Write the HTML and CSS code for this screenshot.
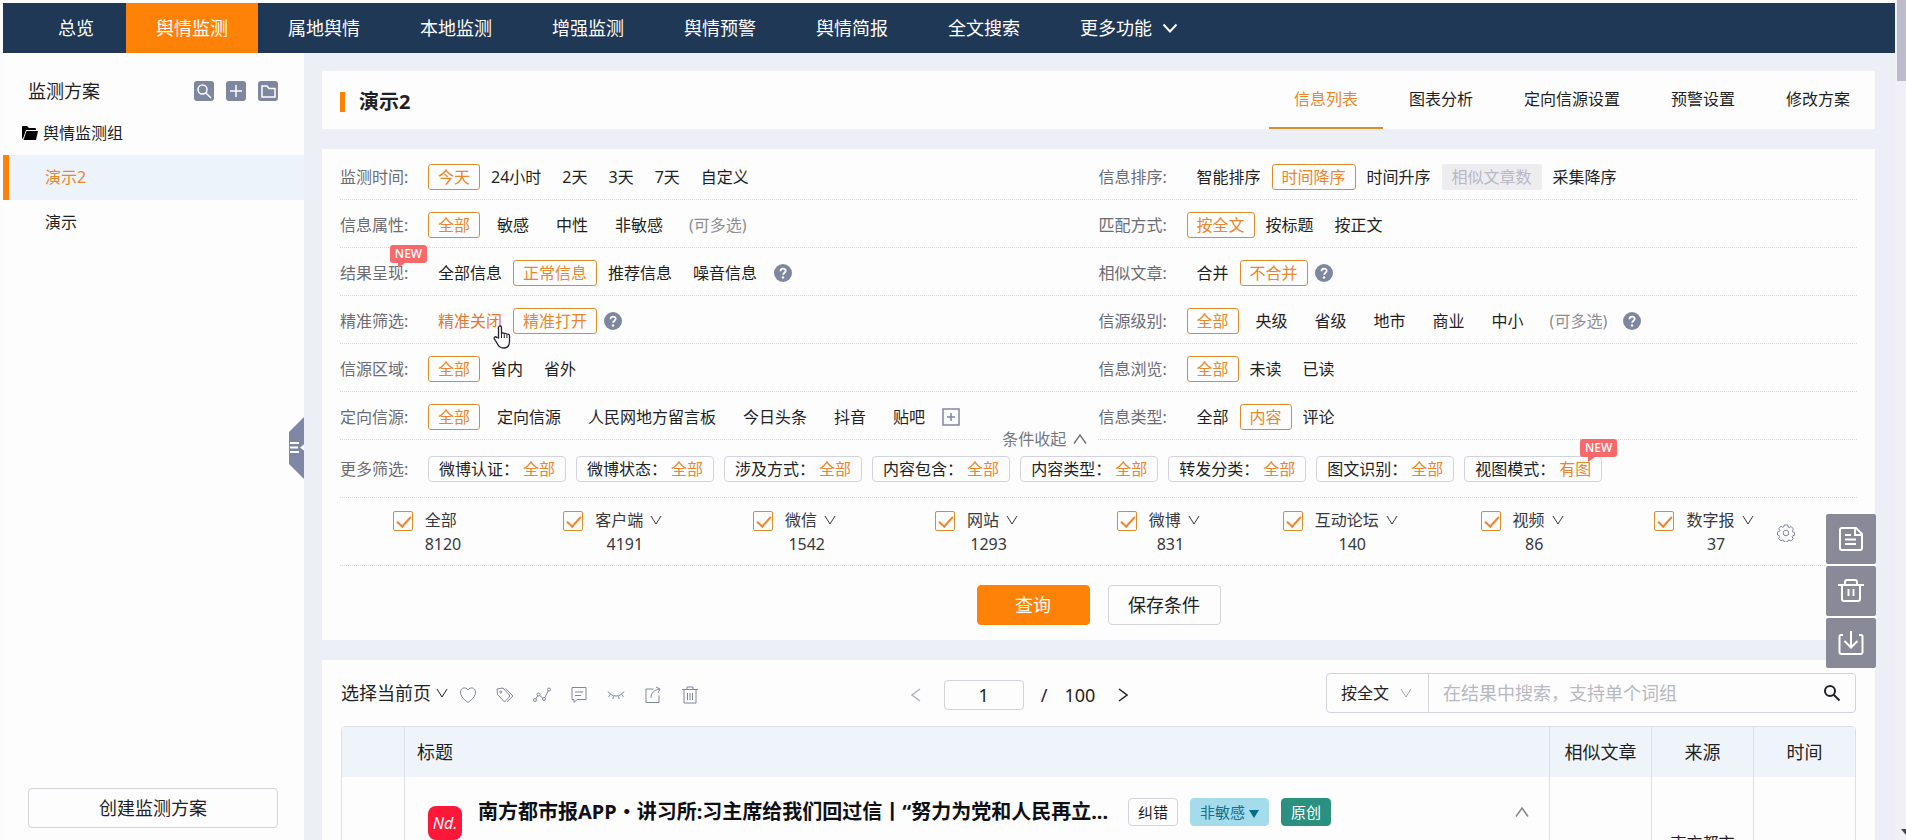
FILE: index.html
```html
<!DOCTYPE html>
<html lang="zh-CN">
<head>
    <meta charset="UTF-8">
    <meta name="viewport" content="width=device-width, initial-scale=1.0">
    <title>舆情监测</title>
    <link rel="stylesheet" href="styles.css">
</head>
<body>

    <!-- Shared icons -->
    <svg class="icon-defs" aria-hidden="true">
        <symbol id="down" viewBox="0 0 12 12"><path d="M1 2l5 8 5-8" /></symbol>
        <symbol id="up" viewBox="0 0 14 12"><path d="M1 10.500l6-8.500 6 8.500" /></symbol>
        <symbol id="search" viewBox="0 0 18 18"><circle cx="7" cy="7" r="5" /><path d="M10.500 10.500l6 6" /></symbol>
        <symbol id="help" viewBox="0 0 18 18">
            <circle cx="9" cy="9" r="9" fill="#7f869f" stroke="none" />
            <path d="M6.500 7.200c0-3.400 5.200-3.400 5.200-.4 0 1.800-2.600 2-2.600 4" stroke="#fff" stroke-width="1.800" />
            <circle cx="9" cy="13.500" r="1.200" fill="#fff" stroke="none" />
        </symbol>
    </svg>

    <div class="page">
        <!-- Navigation Bar -->
        <nav class="topnav">
            <a href="#">总览</a>
            <a href="#" class="active">舆情监测</a>
            <a href="#">属地舆情</a>
            <a href="#">本地监测</a>
            <a href="#">增强监测</a>
            <a href="#">舆情预警</a>
            <a href="#">舆情简报</a>
            <a href="#">全文搜索</a>
            <a href="#">更多功能 <svg class="icon nav-arrow" viewBox="0 0 16 10"><path d="M1.500 1.500L8 8.500l6.500-7" /></svg></a>
        </nav>

        <div class="content">
            <!-- Sidebar -->
            <aside class="sidebar">
                <div class="side-head">
                    <h2>监测方案</h2>
                    <button aria-label="搜索"><svg class="icon" viewBox="0 0 20 20"><circle cx="8.500" cy="8.500" r="4.500" /><path d="M12 12l5 5" /></svg></button>
                    <button aria-label="新增"><svg class="icon" viewBox="0 0 20 20"><path d="M10 4v12M4 10h12" /></svg></button>
                    <button aria-label="文件夹"><svg class="icon" viewBox="0 0 20 20"><path d="M4 5h5l2 2.500h6V16H4z" /></svg></button>
                </div>
                <div class="side-group">
                    <svg width="16" height="14" viewBox="0 0 16 14"><path d="M0 1Q0 0 1 0h4l2 2h6q1 0 1 1v1H4L1 12.500Q0 13 0 12z" /><path d="M4.500 5H16l-2 9H1.500z" /></svg>
                    舆情监测组
                </div>
                <a href="#" class="side-item active">演示2</a>
                <a href="#" class="side-item">演示</a>
                <button class="side-create">创建监测方案</button>
                <button class="side-handle" aria-label="收起">
                    <svg width="15" height="62" viewBox="0 0 15 62">
                        <path d="M15 0v62L0 47V15z" fill="#7f86a6" />
                        <path d="M1 26h9M1 30.500h8M1 35h9" stroke="#fff" stroke-width="2" />
                        <path d="M15 27.500v6l-4-3z" fill="#fff" />
                    </svg>
                </button>
            </aside>

            <main class="main">
                <!-- Title and tabs -->
                <header class="card title-card">
                    <h1>演示2</h1>
                    <div class="tabs">
                        <a href="#" class="active">信息列表</a>
                        <a href="#">图表分析</a>
                        <a href="#">定向信源设置</a>
                        <a href="#">预警设置</a>
                        <a href="#">修改方案</a>
                    </div>
                </header>

                <!-- Filters -->
                <section class="card filter-card">
                    <div class="filter-row">
                        <div class="filter">
                            <span class="label">监测时间:</span>
                            <button class="opt on">今天</button><button class="opt">24小时</button><button class="opt">2天</button><button class="opt">3天</button><button class="opt">7天</button><button class="opt">自定义</button>
                        </div>
                        <div class="filter">
                            <span class="label">信息排序:</span>
                            <button class="opt">智能排序</button><button class="opt on">时间降序</button><button class="opt">时间升序</button><button class="opt" disabled>相似文章数</button><button class="opt">采集降序</button>
                        </div>
                    </div>
                    <div class="filter-row">
                        <div class="filter wide">
                            <span class="label">信息属性:</span>
                            <button class="opt on">全部</button><button class="opt">敏感</button><button class="opt">中性</button><button class="opt">非敏感</button><span class="hint">(可多选)</span>
                        </div>
                        <div class="filter">
                            <span class="label">匹配方式:</span>
                            <button class="opt on">按全文</button><button class="opt">按标题</button><button class="opt">按正文</button>
                        </div>
                    </div>
                    <div class="filter-row">
                        <div class="filter">
                            <span class="label">结果呈现:<span class="new">NEW</span></span>
                            <button class="opt">全部信息</button><button class="opt on">正常信息</button><button class="opt">推荐信息</button><button class="opt">噪音信息</button>
                            <svg class="help"><use href="#help" /></svg>
                        </div>
                        <div class="filter">
                            <span class="label">相似文章:</span>
                            <button class="opt">合并</button><button class="opt on">不合并</button>
                            <svg class="help"><use href="#help" /></svg>
                        </div>
                    </div>
                    <div class="filter-row">
                        <div class="filter">
                            <span class="label">精准筛选:</span>
                            <button class="opt hover">精准关闭
                                <svg class="hand" viewBox="0 0 18 24"><path d="M5.500 13V2.500c0-2 3-2 3 0V9c0-1.500 2.800-1.500 2.800.3 0-1.400 2.600-1.200 2.600.5 0-1 2.600-.9 2.600 1V16c0 4-2 7-6 7-3.500 0-4.800-1.500-6-4l-3-5c-1-2 1-3 2.300-1.500z" fill="#fff" stroke="#223" stroke-width="1.300" /><path d="M8.500 9v4M11.300 9.500v3.500M13.900 10v3" stroke="#223" /></svg>
                            </button><button class="opt on">精准打开</button>
                            <svg class="help"><use href="#help" /></svg>
                        </div>
                        <div class="filter wide">
                            <span class="label">信源级别:</span>
                            <button class="opt on">全部</button><button class="opt">央级</button><button class="opt">省级</button><button class="opt">地市</button><button class="opt">商业</button><button class="opt">中小</button><span class="hint">(可多选)</span>
                            <svg class="help"><use href="#help" /></svg>
                        </div>
                    </div>
                    <div class="filter-row">
                        <div class="filter">
                            <span class="label">信源区域:</span>
                            <button class="opt on">全部</button><button class="opt">省内</button><button class="opt">省外</button>
                        </div>
                        <div class="filter">
                            <span class="label">信息浏览:</span>
                            <button class="opt on">全部</button><button class="opt">未读</button><button class="opt">已读</button>
                        </div>
                    </div>
                    <div class="filter-row">
                        <div class="filter wide">
                            <span class="label">定向信源:</span>
                            <button class="opt on">全部</button><button class="opt">定向信源</button><button class="opt">人民网地方留言板</button><button class="opt">今日头条</button><button class="opt">抖音</button><button class="opt">贴吧</button>
                            <button class="add" aria-label="添加信源"><svg class="icon" viewBox="0 0 18 18"><rect x="1" y="1" width="16" height="16" /><path d="M9 5v8M5 9h8" /></svg></button>
                        </div>
                        <div class="filter">
                            <span class="label">信息类型:</span>
                            <button class="opt">全部</button><button class="opt on">内容</button><button class="opt">评论</button>
                        </div>
                        <button class="collapse">条件收起 <svg class="icon"><use href="#up" /></svg></button>
                    </div>
                    <div class="filter-row more-row">
                        <span class="label">更多筛选:</span>
                        <button class="chip">微博认证：<b>全部</b></button>
                        <button class="chip">微博状态：<b>全部</b></button>
                        <button class="chip">涉及方式：<b>全部</b></button>
                        <button class="chip">内容包含：<b>全部</b></button>
                        <button class="chip">内容类型：<b>全部</b></button>
                        <button class="chip">转发分类：<b>全部</b></button>
                        <button class="chip">图文识别：<b>全部</b></button>
                        <button class="chip">视图模式：<b>有图</b><span class="new">NEW</span></button>
                    </div>

                    <!-- Media channels -->
                    <div class="channels">
                        <div class="channel"><input type="checkbox" id="c1" checked><label for="c1"><span>全部</span><em>8120</em></label></div>
                        <div class="channel"><input type="checkbox" id="c2" checked><label for="c2"><span>客户端 <svg class="icon"><use href="#down" /></svg></span><em>4191</em></label></div>
                        <div class="channel"><input type="checkbox" id="c3" checked><label for="c3"><span>微信 <svg class="icon"><use href="#down" /></svg></span><em>1542</em></label></div>
                        <div class="channel"><input type="checkbox" id="c4" checked><label for="c4"><span>网站 <svg class="icon"><use href="#down" /></svg></span><em>1293</em></label></div>
                        <div class="channel"><input type="checkbox" id="c5" checked><label for="c5"><span>微博 <svg class="icon"><use href="#down" /></svg></span><em>831</em></label></div>
                        <div class="channel"><input type="checkbox" id="c6" checked><label for="c6"><span>互动论坛 <svg class="icon"><use href="#down" /></svg></span><em>140</em></label></div>
                        <div class="channel"><input type="checkbox" id="c7" checked><label for="c7"><span>视频 <svg class="icon"><use href="#down" /></svg></span><em>86</em></label></div>
                        <div class="channel"><input type="checkbox" id="c8" checked><label for="c8"><span>数字报 <svg class="icon"><use href="#down" /></svg></span><em>37</em></label></div>
                        <button class="gear" aria-label="设置">
                            <svg class="icon" viewBox="0 0 18 18"><circle cx="9" cy="9" r="2.800" /><path d="M7.300 1h3.400l.5 2 1 .5 2-1 2.200 2.400-1.100 1.900.3 1 1.900.6v2.800l-1.900.6-.4 1 1 1.900-2.300 2.300-1.900-1-1 .4-.5 1.600H7.300l-.5-1.700-1-.4-1.900 1-2.300-2.200 1.100-2-.4-1L.5 11V8l1.900-.6.4-1-1-1.900 2.300-2.200 1.700 1 1-.4z" /></svg>
                        </button>
                    </div>

                    <div class="actions">
                        <button class="btn primary">查询</button>
                        <button class="btn">保存条件</button>
                    </div>
                </section>

                <!-- Result list -->
                <section class="card list-card">
                    <div class="toolbar">
                        <div class="tools">
                            <button class="pick">选择当前页 <svg class="icon"><use href="#down" /></svg></button>
                            <button aria-label="收藏"><svg class="icon" viewBox="0 0 18 18"><path d="M9 16.500C4 12.500 1.500 10 1.500 6c0-4.500 5.500-5.500 7.500-2 2-3.500 7.500-2.500 7.500 2 0 4-2.500 6.500-7.500 10.500z" /></svg></button>
                            <button aria-label="标签"><svg class="icon" viewBox="0 0 18 18"><path d="M1 3l6-1 7 8-5.500 6L1.500 8.500zM9.500 2.500L17 10l-6 6" /><circle cx="4.800" cy="6" r="1" /></svg></button>
                            <button aria-label="趋势"><svg class="icon" viewBox="0 0 18 18"><circle cx="2" cy="14" r="1.500" /><circle cx="5.500" cy="8.500" r="1.500" /><circle cx="11" cy="13" r="1.500" /><circle cx="16" cy="3.500" r="1.500" /><path d="M2.800 12.700l2-3M6.700 9.500l3 2.500M11.800 11.700l3.500-7" /></svg></button>
                            <button aria-label="备注"><svg class="icon" viewBox="0 0 18 18"><path d="M2 1.500h14v12H7l-3 3v-3H2zM5 6h8M5 9.500h6" /></svg></button>
                            <button aria-label="隐藏"><svg class="icon" viewBox="0 0 18 18"><path d="M1 5.500c4 6 12 6 16 0M3 8.500L1.500 11M6.500 10.500L5.800 13M11.500 10.500l.7 2.500M15 8.500l1.500 2.500" /></svg></button>
                            <button aria-label="分享"><svg class="icon" viewBox="0 0 18 18"><path d="M9.500 3H2v13.500h13V9.500M7 12c0-5 3-8 8.500-9M12 1l4 2-2 4" /></svg></button>
                            <button aria-label="删除"><svg class="icon" viewBox="0 0 18 18"><path d="M1 3.500h16M6 3V1h6v2M3 4v13h12V4M6.500 7v7M9 7v7M11.500 7v7" /></svg></button>
                        </div>
                        <div class="pager">
                            <button class="prev" aria-label="上一页"><svg class="icon" viewBox="0 0 10 14"><path d="M9 1L1 7l8 6" /></svg></button>
                            <input type="text" value="1" aria-label="页码">
                            <span>/</span>
                            <span>100</span>
                            <button class="next" aria-label="下一页"><svg class="icon" viewBox="0 0 10 14"><path d="M1 1l8 6-8 6" /></svg></button>
                        </div>
                        <div class="search">
                            <div class="scope">
                                <select aria-label="搜索范围"><option>按全文</option></select>
                                <svg class="icon"><use href="#down" /></svg>
                            </div>
                            <input type="text" placeholder="在结果中搜索，支持单个词组" aria-label="在结果中搜索">
                            <button aria-label="搜索"><svg class="icon"><use href="#search" /></svg></button>
                        </div>
                    </div>

                    <table class="results">
                        <thead>
                            <tr>
                                <th class="col-check"></th>
                                <th class="col-title">标题</th>
                                <th class="col-side">相似文章</th>
                                <th class="col-side">来源</th>
                                <th class="col-side">时间</th>
                            </tr>
                        </thead>
                        <tbody>
                            <tr>
                                <td></td>
                                <td>
                                    <div class="article">
                                        <span class="logo">Nd.</span>
                                        <a href="#">南方都市报APP・讲习所:习主席给我们回过信丨“努力为党和人民再立...</a>
                                        <button class="tag">纠错</button>
                                        <button class="tag mild">非敏感<svg width="10" height="8" viewBox="0 0 10 8"><path d="M0 0h10L5 8z" /></svg></button>
                                        <span class="tag origin">原创</span>
                                        <button class="fold" aria-label="收起"><svg class="icon"><use href="#up" /></svg></button>
                                    </div>
                                </td>
                                <td></td>
                                <td class="source">南方都市报</td>
                                <td></td>
                            </tr>
                        </tbody>
                    </table>
                </section>
            </main>
        </div>
    </div>

    <!-- Floating tools -->
    <div class="float-tools">
        <button aria-label="简报"><svg class="icon" viewBox="0 0 26 26"><path d="M4 2h14l6 6v14q0 2-2 2H4q-2 0-2-2V4q0-2 2-2zM17 3v6h6M7 9h6M7 13.500h11M7 18h11" /></svg></button>
        <button aria-label="删除"><svg class="icon" viewBox="0 0 26 26"><path d="M0 7h26M7 6V4q0-2 2-2h8q2 0 2 2v2M4 7v14q0 2 2 2h14q2 0 2-2V7M10.500 11v7M15.500 11v7" /></svg></button>
        <button aria-label="导出"><svg class="icon" viewBox="0 0 26 26"><path d="M5 5H3q-1.500 0-1.500 1.500V22q0 2 2 2h19q2 0 2-2V6.500Q24.500 5 23 5h-2M13 1v16M6.500 11l6.500 6.500 6.500-6.500" /></svg></button>
    </div>

    <div class="scroll-track"><i class="scroll-thumb"></i><i class="scroll-arrow"></i></div>

</body>
</html>
```
FILE: styles.css
```css
* {
    box-sizing: border-box;
}

body {
    margin: 0;
    background: #fcfcfe;
    font-family: "Noto Sans", "Noto Sans CJK SC", sans-serif;
    font-size: 16px;
    line-height: 24px;
    color: #1f1f24;
    overflow: hidden;
}

button, input, select {
    font: inherit;
    color: inherit;
    padding: 0;
    border: 0;
    background: none;
}

button {
    cursor: pointer;
    white-space: nowrap;
}

a {
    color: inherit;
    text-decoration: none;
}

h1, h2 {
    margin: 0;
    font-size: 18px;
}

.icon-defs {
    display: none;
}

.icon {
    fill: none;
    stroke: currentColor;
    width: 12px;
    height: 12px;
    flex: none;
}

.page {
    display: flex;
    flex-direction: column;
    height: 100vh;
    padding: 3px 0 0 3px;
    margin-right: 11px;
}

/* Navigation Bar */
.topnav {
    display: flex;
    flex: none;
    height: 50px;
    padding-left: 25px;
    background: #1f3856;
    color: white;
    font-size: 18px;
}

.topnav a {
    display: flex;
    align-items: center;
    padding: 0 30px;
}

.topnav a:first-child {
    padding-right: 32px;
}

.topnav a.active {
    background: #ff8208;
}

.nav-arrow {
    width: 16px;
    height: 10px;
    margin-left: 10px;
    stroke-width: 2;
}

.content {
    display: flex;
    flex: 1;
    min-height: 0;
}

/* Sidebar */
.sidebar {
    position: relative;
    display: flex;
    flex-direction: column;
    flex: none;
    width: 301px;
    padding-bottom: 12px;
    background: #fdfdfe;
}

.side-head {
    display: flex;
    align-items: center;
    gap: 12px;
    padding: 26px 26px 0 25px;
}

.side-head h2 {
    flex: 1;
    font-weight: normal;
}

.side-head button {
    width: 20px;
    height: 20px;
    border-radius: 3px;
    background: #7f86a0;
    color: white;
}

.side-head .icon {
    display: block;
    width: 20px;
    height: 20px;
    stroke-width: 1.5;
}

.side-group {
    display: flex;
    align-items: center;
    gap: 5px;
    padding: 18px 19px 10px;
}

.side-item {
    height: 45px;
    padding-left: 36px;
    border-left: 6px solid transparent;
    line-height: 45px;
}

.side-item.active {
    border-color: #ff8208;
    background: #edf3fb;
    color: #e8872c;
}

.side-create {
    height: 40px;
    margin: auto 26px 0 25px;
    border: 1px solid #d3d3df;
    border-radius: 4px;
    font-size: 18px;
}

.side-handle {
    position: absolute;
    right: 0;
    top: 364px;
    height: 62px;
    line-height: 0;
}

/* Main area */
.main {
    display: flex;
    flex-direction: column;
    flex: 1;
    gap: 20px;
    min-width: 0;
    padding: 18px 20px 0 18px;
    background: #ecf0f6;
    overflow: hidden;
}

.card {
    flex: none;
    padding: 0 18px;
    background: #fdfdfe;
}

.title-card {
    display: flex;
    justify-content: space-between;
    height: 58px;
    padding-right: 0;
}

.title-card h1 {
    display: flex;
    align-items: center;
    padding-top: 4px;
    font-size: 20px;
}

.title-card h1::before {
    content: "";
    width: 5px;
    height: 20px;
    margin-right: 14px;
    background: #ff8208;
}

.tabs {
    display: flex;
    gap: 1px;
}

.tabs a {
    padding: 0 25px;
    border-bottom: 2px solid transparent;
    line-height: 56px;
}

.tabs a.active {
    border-color: #dd8c2c;
    color: #e8872c;
}

/* Filters */
.filter-card {
    padding-top: 3px;
}

.filter-row {
    position: relative;
    display: grid;
    grid-template-columns: 1fr 1fr;
    height: 48px;
    padding-top: 2px;
    border-bottom: 1px dotted #d4d4e4;
}

.filter {
    display: flex;
    align-items: center;
    gap: 1px;
}

.label {
    position: relative;
    flex: none;
    width: 87px;
    color: #6c6c74;
}

.opt {
    position: relative;
    height: 26px;
    padding: 0 9px;
    border: 1px solid transparent;
    border-radius: 3px;
    line-height: 24px;
}

.wide .opt + .opt, .wide .hint {
    margin-left: 6px;
}

.opt.on {
    border-color: #dd8c2c;
    color: #e8872c;
}

.opt.hover {
    color: #e8772c;
}

.opt:disabled {
    background: #ededf1;
    color: #b8b8c4;
}

.hint {
    padding: 0 9px;
    color: #8e8e92;
}

.help {
    width: 18px;
    height: 18px;
    margin-left: 6px;
    fill: none;
}

.hand {
    position: absolute;
    left: 64px;
    top: 16px;
    z-index: 2;
    width: 18px;
    height: 24px;
    fill: none;
}

.add {
    height: 18px;
    margin-left: 6px;
    color: #7f869f;
}

.add .icon {
    display: block;
    width: 18px;
    height: 18px;
    stroke-width: 1.5;
}

/* Red badge with a small tail */
.new {
    position: absolute;
    top: -16px;
    left: 50px;
    z-index: 1;
    width: 37px;
    height: 18px;
    border-radius: 3px;
    background: #f8696b;
    color: white;
    font-size: 12px;
    font-weight: 500;
    line-height: 18px;
    text-align: center;
}

.new::after {
    content: "";
    position: absolute;
    left: 8px;
    top: 18px;
    border-top: 5px solid #f8696b;
    border-right: 7px solid transparent;
}

.collapse {
    position: absolute;
    left: 43%;
    bottom: -12px;
    display: flex;
    align-items: center;
    gap: 7px;
    padding: 0 10px;
    background: #fdfdfe;
    color: #77777c;
}

.collapse .icon, .fold .icon {
    width: 14px;
    height: 12px;
    stroke-width: 1.5;
}

.more-row {
    display: flex;
    align-items: center;
    height: 58px;
    padding-top: 0;
}

.more-row .label {
    width: 88px;
}

.chip {
    position: relative;
    height: 26px;
    margin-right: 10px;
    padding: 0 10px;
    border: 1px solid #d3d3df;
    border-radius: 4px;
    line-height: 24px;
}

.chip b {
    margin-left: 4px;
    color: #e8872c;
    font-weight: normal;
}

.chip .new {
    top: -18px;
    left: 115px;
}

/* Media channels */
.channels {
    display: grid;
    grid-template-columns: repeat(8, 1fr) 0;
    height: 68px;
    padding: 10px 62px 0 0;
    border-bottom: 1px dotted #d4d4e4;
}

.channel {
    display: flex;
    justify-content: center;
    gap: 12px;
}

.channel:first-child {
    padding-right: 8px;
}

.channel input {
    position: relative;
    appearance: none;
    width: 20px;
    height: 20px;
    margin: 3px 0 0;
    border: 1px solid #dd8c2c;
    border-radius: 2px;
}

.channel input:checked::after {
    content: "";
    position: absolute;
    left: 6px;
    top: 1px;
    width: 6px;
    height: 12px;
    border: solid #f0842c;
    border-width: 0 2px 2px 0;
    transform: rotate(42deg);
}

.channel label {
    display: flex;
    flex-direction: column;
    color: #38383e;
}

.channel .icon {
    margin-left: 3px;
}

.channel em {
    padding-right: 8px;
    font-style: normal;
    text-align: center;
}

.channel:first-child em {
    padding: 0;
}

.gear {
    justify-self: end;
    align-self: start;
    width: 18px;
    height: 18px;
    margin-top: 16px;
    color: #7f869f;
}

.gear .icon {
    display: block;
    width: 18px;
    height: 18px;
}

/* Buttons */
.actions {
    display: flex;
    justify-content: center;
    gap: 18px;
    padding: 19px 0 15px;
}

.btn {
    width: 113px;
    height: 40px;
    border: 1px solid #d3d3df;
    border-radius: 4px;
    font-size: 18px;
}

.btn.primary {
    border-color: #ff8208;
    background: #ff8208;
    color: white;
}

/* Toolbar */
.list-card {
    padding: 0 19px;
}

.toolbar {
    display: grid;
    grid-template-columns: 1fr auto 1fr;
    align-items: center;
    height: 66px;
    font-size: 18px;
}

.tools {
    display: flex;
    align-items: center;
    gap: 19px;
    color: #7f869f;
}

.tools button + button {
    padding-top: 4px;
}

.tools .icon {
    display: block;
    width: 18px;
    height: 18px;
}

.tools .pick {
    display: flex;
    align-items: center;
    gap: 5px;
    margin-right: -8px;
    color: #1f1f24;
}

.tools .pick .icon {
    width: 12px;
    height: 12px;
}

.pager {
    display: flex;
    align-items: center;
    gap: 17px;
    padding: 4px 158px 0 0;
}

.pager .icon {
    display: block;
    width: 10px;
    height: 14px;
    stroke-width: 1.5;
}

.pager .prev {
    margin-right: 6px;
    color: #b4b4bc;
}

.pager .next {
    margin-left: 6px;
}

.pager input {
    width: 80px;
    height: 30px;
    border: 1px solid #d3d3df;
    border-radius: 4px;
    text-align: center;
}

.search {
    display: flex;
    justify-self: end;
    width: 530px;
    height: 40px;
    border: 1px solid #d3d3df;
    border-radius: 4px;
}

.scope {
    position: relative;
    flex: none;
    width: 102px;
    border-right: 1px solid #d3d3df;
    font-size: 16px;
}

.scope select {
    appearance: none;
    width: 100%;
    height: 100%;
    padding-left: 14px;
}

.scope .icon {
    position: absolute;
    right: 16px;
    top: 13px;
    color: #a4a4ac;
    pointer-events: none;
}

.search input {
    flex: 1;
    min-width: 0;
    padding-left: 14px;
}

.search input::placeholder {
    color: #b8b8c0;
}

.search button {
    width: 46px;
    padding-left: 14px;
}

.search button .icon {
    display: block;
    width: 18px;
    height: 18px;
    stroke-width: 2;
}

/* Results table */
.results {
    width: 100%;
    table-layout: fixed;
    border: 1px solid #dcdfea;
    border-radius: 4px;
    border-spacing: 0;
}

.results th {
    height: 50px;
    padding: 0;
    background: #eff4fb;
    font-size: 18px;
    font-weight: normal;
}

.results th + th, .results td + td {
    border-left: 1px solid #dcdfea;
}

.results td {
    height: 100px;
    padding: 0;
    vertical-align: top;
}

.col-check {
    width: 62px;
}

.results .col-title {
    padding-left: 12px;
    text-align: left;
}

.col-side {
    width: 102px;
}

.article {
    display: flex;
    align-items: center;
    padding: 7px 20px 0 23px;
}

.article a {
    min-width: 0;
    margin: 0 20px 0 16px;
    color: #101014;
    font-size: 20px;
    font-weight: bold;
    line-height: 32px;
    white-space: nowrap;
}

.logo {
    flex: none;
    width: 34px;
    height: 34px;
    margin-top: 22px;
    border-radius: 8px;
    background: #fb1838;
    color: white;
    font-size: 16px;
    font-style: italic;
    line-height: 34px;
    text-align: center;
}

.tag {
    flex: none;
    height: 28px;
    margin-right: 12px;
    padding: 0 9px;
    border: 1px solid #d3d3df;
    border-radius: 4px;
    font-size: 15px;
    line-height: 26px;
}

.tag.mild {
    border-color: #a4dcec;
    background: #a4dcec;
    color: #12708c;
}

.tag.mild svg {
    margin-left: 4px;
    fill: #006c88;
}

.tag.origin {
    border-color: #2c9080;
    background: #2c9080;
    color: white;
}

.fold {
    margin-left: auto;
    color: #85858c;
}

.results .source {
    padding: 54px 16px 0;
    text-align: center;
}

/* Floating tools */
.float-tools {
    position: fixed;
    right: 30px;
    top: 514px;
    display: flex;
    flex-direction: column;
    gap: 2px;
    background: white;
}

.float-tools button {
    width: 50px;
    height: 50px;
    border-radius: 2px;
    background: #898a97;
    color: white;
}

.float-tools .icon {
    display: block;
    width: 26px;
    height: 26px;
    margin: 0 auto;
    stroke-width: 2;
}

/* Page scrollbar */
.scroll-track {
    position: fixed;
    top: 0;
    right: 0;
    width: 11px;
    height: 100vh;
    background: #f0f0f6;
}

.scroll-thumb {
    position: absolute;
    top: 0;
    right: 0;
    width: 9px;
    height: 81px;
    background: #bcbccc;
}

.scroll-arrow {
    position: absolute;
    right: 0;
    bottom: 5px;
    border-top: 6px solid #44444c;
    border-left: 5px solid transparent;
}
```
